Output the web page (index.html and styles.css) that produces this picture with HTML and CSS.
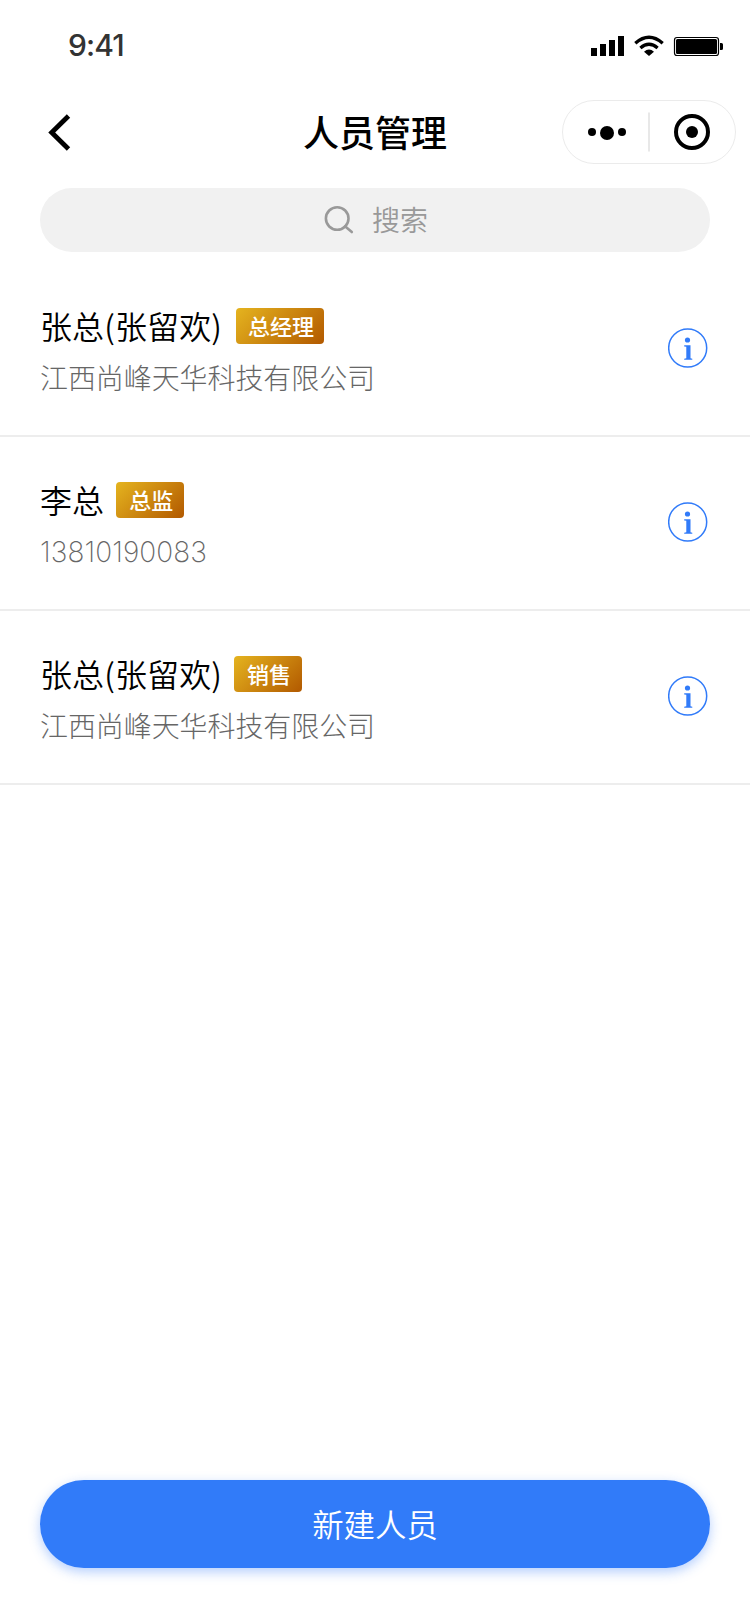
FILE: index.html
```html
<!DOCTYPE html>
<html lang="zh-CN">
<head>
<meta charset="utf-8">
<title>人员管理</title>
<link rel="stylesheet" href="styles.css">
</head>
<body>
<div class="page">
  <header class="status">
    <span class="time">9:41</span>
    <svg class="status-icons" width="134" height="24" viewBox="590 34 134 24">
      <path d="M591 48h6v8h-6zM600 44h6v12h-6zM609 40h6v16h-6zM618 36h6v20h-6z"/>
      <path d="M635.300 43.300Q649 31.300 662.700 43.300M640.400 48Q649 40.600 657.600 48" fill="none" stroke="#000" stroke-width="3.300"/>
      <path d="M644 51.700Q649 47.300 654 51.700L649 56z"/>
      <rect x="674.5" y="37.5" width="44" height="18" rx="2.5" fill="none" stroke="#000" stroke-width="1.200"/>
      <rect x="676" y="39" width="41" height="15" rx="1.5"/>
      <path d="M720 43h1.5a1.5 1.5 0 0 1 1.5 1.5v4a1.5 1.5 0 0 1-1.5 1.5H720z"/>
    </svg>
  </header>
  <nav class="nav">
    <svg class="back" width="24" height="38" viewBox="48 114 24 38"><path d="M68.500 116L51.700 132.500L68.500 149" fill="none" stroke="#000" stroke-width="4.800"/></svg>
    <h1 class="title">人员管理</h1>
    <div class="capsule">
      <svg width="174" height="64" viewBox="562 100 174 64">
        <rect x="562.5" y="100.500" width="173" height="63" rx="31.5" fill="#fff" stroke="#ebebeb"/>
        <circle cx="592" cy="132" r="4"/><circle cx="607" cy="133" r="7"/><circle cx="622" cy="132" r="4"/>
        <rect x="648" y="112.500" width="2" height="39" fill="#e8e8e8"/>
        <circle cx="692" cy="132" r="16" fill="none" stroke="#000" stroke-width="4"/><circle cx="692" cy="132" r="6"/>
      </svg>
    </div>
  </nav>
  <div class="search">
    <svg width="30" height="30" viewBox="324 206 30 30" fill="none" stroke="#999" stroke-width="2.600"><circle cx="337.200" cy="219.500" r="11.300"/><path d="M345 227.300L351.800 233" stroke-linecap="round"/></svg>
    <span class="hint">搜索</span>
  </div>
  <main class="list">
    <div class="row">
      <div class="person">
        <div class="head"><span class="name">张总(张留欢)</span><span class="badge wide">总经理</span></div>
        <div class="detail">江西尚峰天华科技有限公司</div>
      </div>
      <svg class="info" width="40" height="40" viewBox="0 0 40 40"><circle cx="19.700" cy="20" r="19" fill="none" stroke="#317bf9" stroke-width="1.500"/><circle cx="19.500" cy="12" r="2.600"/><path d="M16.200 17.200H22.500V30.300L24.300 30.700V31.700H16.200V30.700L18.300 30.300V18.800L16.200 18.500Z"/></svg>
    </div>
    <div class="row">
      <div class="person">
        <div class="head"><span class="name">李总</span><span class="badge">总监</span></div>
        <div class="detail phone">13810190083</div>
      </div>
      <svg class="info" width="40" height="40" viewBox="0 0 40 40"><circle cx="19.700" cy="20" r="19" fill="none" stroke="#317bf9" stroke-width="1.500"/><circle cx="19.500" cy="12" r="2.600"/><path d="M16.200 17.200H22.500V30.300L24.300 30.700V31.700H16.200V30.700L18.300 30.300V18.800L16.200 18.500Z"/></svg>
    </div>
    <div class="row">
      <div class="person">
        <div class="head"><span class="name">张总(张留欢)</span><span class="badge">销售</span></div>
        <div class="detail">江西尚峰天华科技有限公司</div>
      </div>
      <svg class="info" width="40" height="40" viewBox="0 0 40 40"><circle cx="19.700" cy="20" r="19" fill="none" stroke="#317bf9" stroke-width="1.500"/><circle cx="19.500" cy="12" r="2.600"/><path d="M16.200 17.200H22.500V30.300L24.300 30.700V31.700H16.200V30.700L18.300 30.300V18.800L16.200 18.500Z"/></svg>
    </div>
  </main>
  <button class="create">新建人员</button>
</div>
</body>
</html>
```
FILE: styles.css
```css
* { box-sizing: border-box; }
body { margin: 0; background: #fff; font-family: "Noto Sans CJK SC", sans-serif; color: #000; }
.page { width: 750px; height: 1624px; display: flex; flex-direction: column; }
.status { height: 92px; padding: 0 26px 0 68px; display: flex; align-items: center; justify-content: space-between; }
.time { font: 500 30px/36px Inter, sans-serif; letter-spacing: -0.9px; color: #333; padding-bottom: 2px; }
.status-icons { display: block; }
.nav { height: 80px; padding: 0 14px 0 48px; display: grid; grid-template-columns: 174px 1fr 174px; align-items: center; }
.back { display: block; margin-top: 2px; }
.title { margin: 0 0 2px -34px; text-align: center; font-size: 36px; font-weight: 500; line-height: 52px; }
.capsule svg { display: block; }
.search { height: 64px; margin: 16px 40px 11px; padding-left: 2px; border-radius: 32px; background: #f1f1f1; display: flex; align-items: center; justify-content: center; gap: 18px; }
.hint { font-size: 28px; line-height: 40px; color: #999; font-weight: 350; padding-bottom: 2px; }
.row { height: 174px; padding: 0 42px 0 40px; border-bottom: 2px solid #ededed; display: flex; align-items: center; justify-content: space-between; }
.person { height: 172px; padding-top: 40px; }
.head { display: flex; align-items: center; gap: 12px; height: 46px; }
.name { font-size: 32px; line-height: 46px; font-weight: 350; letter-spacing: 0.12px; padding-bottom: 2px; }
.badge { height: 36px; margin-bottom: 1px; padding: 0 11px 0 13px; border-radius: 4px; background: linear-gradient(135deg, #e5b41f, #b25900); color: #fff; font-size: 22px; font-weight: 500; line-height: 34px; }
.wide { padding: 0 10px 0 12px; margin-left: 2px; }
.detail { margin-top: 8px; font-size: 28px; line-height: 40px; letter-spacing: -0.08px; font-weight: 300; color: #666; }
.phone { font-family: Inter, sans-serif; font-weight: 200; letter-spacing: 0.08px; padding-top: 1px; }
.info { display: block; fill: #317bf9; margin-bottom: 2px; }
.create { height: 88px; margin: auto 40px 56px; border: 0; padding: 0 0 1px; border-radius: 44px; background: #317bf9; box-shadow: 0 4px 12px rgba(49, 123, 249, 0.36); color: #fff; font: 350 31.400px/46px "Noto Sans CJK SC", sans-serif; }
```
